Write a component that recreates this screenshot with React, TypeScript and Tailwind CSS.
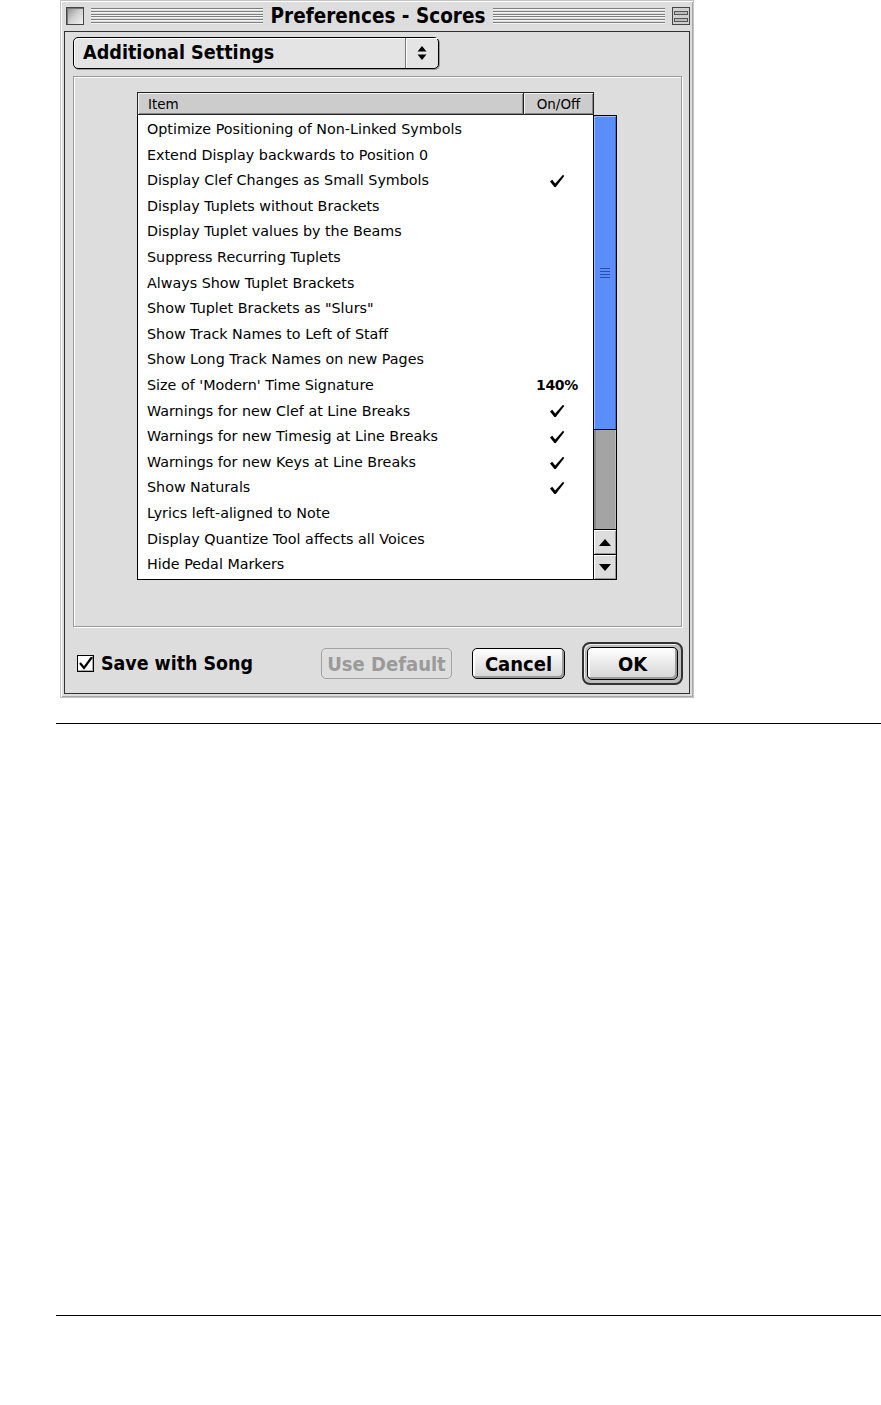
import React from "react";

const rows: { label: string; value?: "check" | string }[] = [
  { label: "Optimize Positioning of Non-Linked Symbols" },
  { label: "Extend Display backwards to Position 0" },
  { label: "Display Clef Changes as Small Symbols", value: "check" },
  { label: "Display Tuplets without Brackets" },
  { label: "Display Tuplet values by the Beams" },
  { label: "Suppress Recurring Tuplets" },
  { label: "Always Show Tuplet Brackets" },
  { label: 'Show Tuplet Brackets as "Slurs"' },
  { label: "Show Track Names to Left of Staff" },
  { label: "Show Long Track Names on new Pages" },
  { label: "Size of 'Modern' Time Signature", value: "140%" },
  { label: "Warnings for new Clef at Line Breaks", value: "check" },
  { label: "Warnings for new Timesig at Line Breaks", value: "check" },
  { label: "Warnings for new Keys at Line Breaks", value: "check" },
  { label: "Show Naturals", value: "check" },
  { label: "Lyrics left-aligned to Note" },
  { label: "Display Quantize Tool affects all Voices" },
  { label: "Hide Pedal Markers" },
];

const charcoal = "font-['DejaVu_Sans_Condensed','DejaVu_Sans',sans-serif] font-bold whitespace-nowrap";
const geneva = "font-['DejaVu_Sans',sans-serif]";

function Check() {
  return (
    <svg width="16" height="14" viewBox="0 0 16 14">
      <path d="M1 7.5 L3.2 5.8 L6.2 9.5 L14 0.8 L15.3 2 L6.8 13 L5.4 13 Z" fill="#000" />
    </svg>
  );
}

function Stripes() {
  return (
    <div className="flex-1 h-[18px] flex flex-col justify-between py-[1px]">
      {Array.from({ length: 6 }).map((_, i) => (
        <div key={i} className="h-[2px] bg-[#7e7e7e] border-b border-[#f4f4f4]" />
      ))}
    </div>
  );
}

function Button({ children, disabled, className }: { children: React.ReactNode; disabled?: boolean; className?: string }) {
  return (
    <div
      className={`shrink-0 h-[31px] flex items-center justify-center rounded-[5px] text-[20px] ${charcoal} ${
        disabled
          ? "border border-[#a3a3a3] text-[#9a9a9a] bg-[#dedede]"
          : "border border-black text-black bg-gradient-to-b from-white to-[#d4d4d4] shadow-[inset_-2px_-2px_0_#9a9a9a,inset_2px_2px_0_#ffffff]"
      } ${className ?? ""}`}
    >
      {children}
    </div>
  );
}

export default function App() {
  return (
    <div className="w-[881px] h-[1405px] bg-white relative overflow-hidden">
      {/* Window */}
      <div className="ml-[60px] w-[634px] h-[698px] bg-[#dddddd] border border-[#c4c4c4] shadow-[inset_1px_1px_0_#ffffff,inset_-1px_-1px_0_#a8a8a8] flex flex-col px-[3px] pb-[3px]">
        {/* Title bar */}
        <div className="h-[30px] shrink-0 flex items-center gap-[7px] pl-[2px]">
          <div className="w-[18px] h-[18px] border border-[#444] bg-gradient-to-br from-[#8f8f8f] via-[#d0d0d0] to-[#f2f2f2] shadow-[inset_1px_1px_0_#777]" />
          <Stripes />
          <div className={`${charcoal} text-[20.5px] leading-none text-black px-[1px]`}>Preferences - Scores</div>
          <Stripes />
          <div className="w-[18px] h-[18px] border border-[#444] bg-[#cfcfcf] flex flex-col justify-center gap-[3px] px-[1px]">
            <div className="h-[4px] border border-[#555] bg-[#bbb]" />
            <div className="h-[4px] border border-[#555] bg-[#bbb]" />
          </div>
        </div>

        {/* Content */}
        <div className="flex-1 min-h-0 border border-[#303030] bg-[#dddddd] flex flex-col pl-[8px] pr-[6px] pt-[5px]">
          {/* Popup */}
          <div className="shrink-0 w-[366px] h-[32px] border border-black rounded-[5px] flex bg-[#e4e4e4] shadow-[inset_1px_1px_0_#fff,1px_1px_0_#999]">
            <div className={`flex-1 flex items-center pl-[9px] ${charcoal} text-[19.6px] text-black`}>Additional Settings</div>
            <div className="w-[33px] border-l border-[#777] flex items-center justify-center shadow-[inset_1px_1px_0_#fff]">
              <svg width="10" height="16" viewBox="0 0 10 16">
                <path d="M5 1 L9.5 6.5 L0.5 6.5 Z" fill="#000" />
                <path d="M5 15 L9.5 9.5 L0.5 9.5 Z" fill="#000" />
              </svg>
            </div>
          </div>

          {/* Group box */}
          <div className="shrink-0 mt-[7px] w-[609px] h-[551px] border border-[#9a9a9a] shadow-[1px_1px_0_#fff,inset_1px_1px_0_#fff] flex flex-col pl-[63px] pt-[15px]">
            {/* Header */}
            <div className="flex w-[457px] h-[23px] border border-[#222] bg-[#cccccc]">
              <div className={`flex-1 flex items-center pl-[10px] pt-[1px] ${geneva} text-[13.5px] text-black shadow-[inset_1px_1px_0_#f2f2f2,inset_-1px_-1px_0_#8a8a8a]`}>
                Item
              </div>
              <div className={`w-[70px] border-l border-[#222] flex items-center justify-center pt-[1px] ${geneva} text-[13.5px] text-black shadow-[inset_1px_1px_0_#f2f2f2,inset_-1px_-1px_0_#8a8a8a]`}>
                On/Off
              </div>
            </div>
            {/* List body + scrollbar */}
            <div className="flex">
              <div className="w-[457px] h-[465px] bg-white border-x border-b border-black flex flex-col overflow-hidden pt-[2px]">
                {rows.map((r) => (
                  <div key={r.label} className="h-[25.6px] shrink-0 flex items-center">
                    <div className={`flex-1 pl-[9px] ${geneva} text-[14.3px] text-black whitespace-nowrap`}>{r.label}</div>
                    <div className="w-[72px] flex items-center justify-center">
                      {r.value === "check" ? (
                        <Check />
                      ) : r.value ? (
                        <span className={`${geneva} font-bold text-[14px] text-black tracking-[-0.3px]`}>{r.value}</span>
                      ) : null}
                    </div>
                  </div>
                ))}
              </div>
              {/* Scrollbar */}
              <div className="w-[23px] h-[465px] border border-black border-l-0 flex flex-col bg-[#a4a4a4]">
                <div className="h-[314px] bg-[#5b8ef9] border-b border-black flex items-center justify-center shadow-[inset_1px_1px_0_#9bbcff,inset_-1px_0_0_#3f6fd6]">
                  <div className="flex flex-col gap-[2px]">
                    <div className="w-[10px] h-px bg-[#2a4fa8]" />
                    <div className="w-[10px] h-px bg-[#2a4fa8]" />
                    <div className="w-[10px] h-px bg-[#2a4fa8]" />
                    <div className="w-[10px] h-px bg-[#2a4fa8]" />
                  </div>
                </div>
                <div className="flex-1 shadow-[inset_2px_0_0_#8a8a8a,inset_-1px_0_0_#bcbcbc]" />
                <div className="h-[25px] border-t border-black bg-[#dcdcdc] flex items-center justify-center shadow-[inset_1px_1px_0_#fff,inset_-1px_-1px_0_#999]">
                  <svg width="12" height="7" viewBox="0 0 12 7"><path d="M6 0 L12 7 L0 7 Z" fill="#000" /></svg>
                </div>
                <div className="h-[25px] border-t border-black bg-[#dcdcdc] flex items-center justify-center shadow-[inset_1px_1px_0_#fff,inset_-1px_-1px_0_#999]">
                  <svg width="12" height="7" viewBox="0 0 12 7"><path d="M0 0 L12 0 L6 7 Z" fill="#000" /></svg>
                </div>
              </div>
            </div>
          </div>

          {/* Bottom row */}
          <div className="shrink-0 flex items-center mt-[15px] pl-[4px]">
            <div className="shrink-0 w-[17px] h-[17px] border border-black bg-white shadow-[inset_-1px_-1px_0_#aaa] flex items-center justify-center">
              <svg width="15" height="13" viewBox="0 0 15 13">
                <path d="M2 6 L6 11 L14 0" stroke="#000" strokeWidth="2.2" fill="none" />
              </svg>
            </div>
            <span className={`shrink-0 ml-[7px] w-[151px] ${charcoal} text-[19.4px] text-black`}>Save with Song</span>
            <Button disabled className="ml-[69px] w-[131px]">Use Default</Button>
            <Button className="ml-[20px] w-[93px]">Cancel</Button>
            <div className="shrink-0 ml-[17px] w-[101px] h-[43px] border-[2px] border-[#333] rounded-[8px] bg-[#bdbdbd] p-[3px] shadow-[inset_1px_1px_0_#eee]">
              <Button className="w-full h-full">OK</Button>
            </div>
          </div>
        </div>
      </div>

      {/* Page rules */}
      <div className="ml-[56px] mt-[25px] h-px bg-black" />
      <div className="ml-[56px] mt-[591px] h-px bg-black" />
    </div>
  );
}
